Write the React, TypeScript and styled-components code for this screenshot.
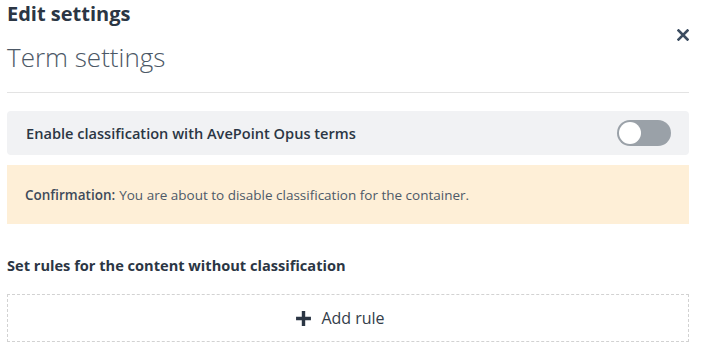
import React, { useState } from 'react';
import styled, { createGlobalStyle } from 'styled-components';

const GlobalStyle = createGlobalStyle`
    html, body {
        margin: 0;
        padding: 0;
        background: #fff;
        font-family: "Open Sans", "Liberation Sans", sans-serif;
    }
`;

const Panel = styled.div`
    width: 682px;
    padding: 0 15px 0 7px;
    color: #2f3a48;
`;

const Header = styled.div`
    display: flex;
    justify-content: space-between;
    align-items: flex-start;
    border-bottom: 1px solid #e3e3e3;
    padding-bottom: 18px;
`;

const Titles = styled.div`
    display: flex;
    flex-direction: column;
`;

const Heading = styled.h1`
    margin: 0;
    font-size: 20px;
    font-weight: 700;
    line-height: 27px;
    color: #2b3644;
`;

const SubHeading = styled.h2`
    margin: 13px 0 0;
    font-size: 26px;
    font-weight: 300;
    line-height: 34px;
    color: #4c5866;
`;

const CloseButton = styled.button`
    border: 0;
    background: none;
    padding: 0;
    margin: 28px -1px 0 0;
    width: 14px;
    height: 14px;
    cursor: pointer;
    display: flex;
    align-items: center;
    justify-content: center;
`;

const ToggleRow = styled.div`
    margin-top: 18px;
    height: 44px;
    display: flex;
    align-items: center;
    justify-content: space-between;
    background: #f1f2f4;
    border-radius: 4px;
    padding: 0 18px 0 19px;
`;

const ToggleLabel = styled.span`
    font-size: 14.6px;
    font-weight: 600;
    color: #2b3644;
`;

const Switch = styled.button<{ $on: boolean }>`
    position: relative;
    width: 54px;
    height: 26px;
    border-radius: 13px;
    border: 0;
    padding: 0;
    background: ${p => (p.$on ? '#3b82c4' : '#9aa1a8')};
    cursor: pointer;

    &::after {
        content: '';
        position: absolute;
        top: 2px;
        left: ${p => (p.$on ? '30px' : '2px')};
        width: 22px;
        height: 22px;
        border-radius: 50%;
        background: #fff;
    }
`;

const Notice = styled.div`
    margin-top: 10px;
    height: 59px;
    display: flex;
    align-items: center;
    padding: 0 18px;
    background: #feefd7;
    font-size: 13.5px;
    color: #4d5968;

    b {
        font-weight: 600;
        color: #3f4b5a;
        margin-right: 4px;
    }
`;

const SectionTitle = styled.h3`
    margin: 31px 0 0;
    font-size: 14.6px;
    font-weight: 700;
    line-height: 20px;
    color: #2b3644;
`;

const AddRule = styled.button`
    margin-top: 19px;
    width: 100%;
    height: 48px;
    display: flex;
    align-items: center;
    justify-content: center;
    gap: 9px;
    padding: 0 16px 0 0;
    border: 1px dashed #d2d2d2;
    background: #fff;
    font-family: inherit;
    font-size: 16px;
    color: #333d4a;
    cursor: pointer;
`;

const App = () => {
    const [on, setOn] = useState(false);
    return (
        <Panel>
            <GlobalStyle />
            <Header>
                <Titles>
                    <Heading>Edit settings</Heading>
                    <SubHeading>Term settings</SubHeading>
                </Titles>
                <CloseButton aria-label="Close">
                    <svg width="12" height="12" viewBox="0 0 12 12">
                        <path d="M1.5 1.5 L10.5 10.5 M10.5 1.5 L1.5 10.5" stroke="#3c4d61" strokeWidth="2.6" strokeLinecap="square" />
                    </svg>
                </CloseButton>
            </Header>
            <ToggleRow>
                <ToggleLabel>Enable classification with AvePoint Opus terms</ToggleLabel>
                <Switch $on={on} onClick={() => setOn(!on)} aria-label="Toggle classification" />
            </ToggleRow>
            <Notice>
                <b>Confirmation:</b> You are about to disable classification for the container.
            </Notice>
            <SectionTitle>Set rules for the content without classification</SectionTitle>
            <AddRule>
                <svg width="17" height="17" viewBox="0 0 16 16">
                    <path d="M8 1 V15 M1 8 H15" stroke="#2b3644" strokeWidth="3.2" />
                </svg>
                Add rule
            </AddRule>
        </Panel>
    );
};

export default App;
